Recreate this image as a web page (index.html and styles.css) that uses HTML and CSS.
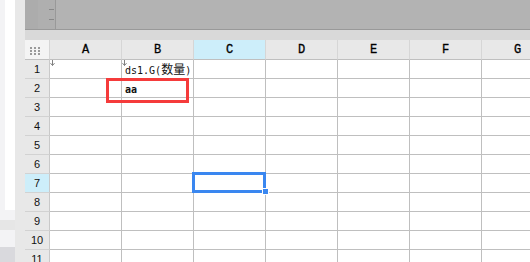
FILE: index.html
```html
<!DOCTYPE html>
<html lang="zh">
  <head>
    <meta charset="utf-8" />
    <title>Report Designer</title>
    <link rel="stylesheet" href="styles.css">
  </head>
  <body>
    <div class="app">
      <div class="side">
        <div class="side-top"></div>
        <div class="side-s1"></div>
        <div class="side-s2"></div>
        <div class="side-s3"></div>
        <div class="side-s4"></div>
      </div>
      <div class="main">
        <div class="toolbar">
          <div class="tb-handle"></div>
          <div class="tb-ruler"><i></i><i></i></div>
          <div class="tb-area"></div>
        </div>
        <div class="band"></div>
        <div class="sheet">
          <div class="grid">
            <!-- header -->
            <div class="c corner">
              <svg width="10" height="8" viewBox="0 0 10 8">
                <g fill="#9a9a9a">
                  <rect x="0" y="0" width="2" height="2"/><rect x="4" y="0" width="2" height="2"/><rect x="8" y="0" width="2" height="2"/>
                  <rect x="0" y="3" width="2" height="2"/><rect x="4" y="3" width="2" height="2"/><rect x="8" y="3" width="2" height="2"/>
                  <rect x="0" y="6" width="2" height="2"/><rect x="4" y="6" width="2" height="2"/><rect x="8" y="6" width="2" height="2"/>
                </g>
              </svg>
            </div>
            <div class="c h">A</div>
            <div class="c h">B</div>
            <div class="c h hi">C</div>
            <div class="c h">D</div>
            <div class="c h">E</div>
            <div class="c h">F</div>
            <div class="c h">G</div>

            <!-- row 1 -->
            <div class="c rh">1</div>
            <div class="c"><svg class="dir" width="5" height="6" viewBox="0 0 5 6"><path d="M2.5 0V5.5M0.5 3.2L2.5 5.5L4.5 3.2" fill="none" stroke="#808080"/></svg></div>
            <div class="c txt"><svg class="dir" width="5" height="6" viewBox="0 0 5 6"><path d="M2.5 0V5.5M0.5 3.2L2.5 5.5L4.5 3.2" fill="none" stroke="#808080"/></svg>ds1.G(<span class="zh">数量</span>)</div>
            <div class="c"></div><div class="c"></div><div class="c"></div><div class="c"></div><div class="c"></div>

            <!-- row 2 -->
            <div class="c rh">2</div>
            <div class="c"></div>
            <div class="c txt val">aa</div>
            <div class="c"></div><div class="c"></div><div class="c"></div><div class="c"></div><div class="c"></div>

            <div class="c rh">3</div>
            <div class="c"></div><div class="c"></div><div class="c"></div><div class="c"></div><div class="c"></div><div class="c"></div><div class="c"></div>
            <div class="c rh">4</div>
            <div class="c"></div><div class="c"></div><div class="c"></div><div class="c"></div><div class="c"></div><div class="c"></div><div class="c"></div>
            <div class="c rh">5</div>
            <div class="c"></div><div class="c"></div><div class="c"></div><div class="c"></div><div class="c"></div><div class="c"></div><div class="c"></div>
            <div class="c rh">6</div>
            <div class="c"></div><div class="c"></div><div class="c"></div><div class="c"></div><div class="c"></div><div class="c"></div><div class="c"></div>
            <div class="c rh hi">7</div>
            <div class="c"></div><div class="c"></div><div class="c"></div><div class="c"></div><div class="c"></div><div class="c"></div><div class="c"></div>
            <div class="c rh">8</div>
            <div class="c"></div><div class="c"></div><div class="c"></div><div class="c"></div><div class="c"></div><div class="c"></div><div class="c"></div>
            <div class="c rh">9</div>
            <div class="c"></div><div class="c"></div><div class="c"></div><div class="c"></div><div class="c"></div><div class="c"></div><div class="c"></div>
            <div class="c rh">10</div>
            <div class="c"></div><div class="c"></div><div class="c"></div><div class="c"></div><div class="c"></div><div class="c"></div><div class="c"></div>
            <div class="c rh">11</div>
            <div class="c"></div><div class="c"></div><div class="c"></div><div class="c"></div><div class="c"></div><div class="c"></div><div class="c"></div>
          </div>

          <div class="mark-red"></div>
          <div class="selection"><span class="handle"></span></div>
        </div>
      </div>
    </div>
  </body>
</html>
```

FILE: styles.css
```css
html,
body {
  margin: 0;
  padding: 0;
  width: 530px;
  height: 262px;
  overflow: hidden;
  background: #e8e8e8;
}
.app {
  display: flex;
  height: 262px;
}
.side {
  width: 15px;
  display: flex;
  flex-direction: column;
  flex-shrink: 0;
}
.side-top {
  height: 210px;
  background: #fff;
  border-left: 5px solid #f3f3f5;
  box-sizing: border-box;
}
.side-s1 {
  height: 10px;
  background: #f3f3f5;
}
.side-s2 {
  height: 10px;
  background: #e6e6e6;
}
.side-s3 {
  height: 17px;
  background: #f3f3f5;
}
.side-s4 {
  flex: 1;
  background: #d9d9dd;
}
.main {
  flex: 1;
  padding-left: 10px;
  background: #e8e8e8;
  overflow: hidden;
}
.toolbar {
  display: flex;
  height: 30px;
  box-sizing: border-box;
  border-bottom: 1px solid #999;
}
.tb-handle {
  width: 13px;
  background: #acacac;
}
.tb-ruler {
  width: 18px;
  box-sizing: border-box;
  padding-top: 9px;
  background: #afafaf;
  border-right: 1px solid #999;
}
.tb-ruler i {
  display: block;
  width: 5px;
  height: 1px;
  margin: 0 0 9px 11px;
  background: #888;
}
.tb-area {
  flex: 1;
  background: #b3b3b3;
}
.band {
  height: 10px;
  background: #d9d9d9;
}
.sheet {
  position: relative;
}
.grid {
  display: grid;
  grid-template-columns: 25px repeat(7, 72px);
  grid-template-rows: 20px repeat(11, 19px);
}
.c {
  position: relative;
  box-sizing: border-box;
  border-right: 1px solid #bfbfbf;
  border-bottom: 1px solid #bfbfbf;
  background: #fff;
  color: #111;
}
.corner {
  background: #f4f4f4;
  border-right-color: #d6d6d6;
  padding: 7px 0 0 5px;
}
.corner svg {
  display: block;
}
.h {
  background: #e8e8e8;
  border-right-color: #d6d6d6;
  text-align: center;
  color: #000;
  font: 12px/20px "Liberation Mono", monospace;
  -webkit-text-stroke: 0.3px #000;
}
.rh {
  background: #e8e8e8;
  border-right-color: #c9c9c9;
  border-bottom-color: #d2d2d2;
  text-align: center;
  font: 11px/19px "Liberation Sans", sans-serif;
}
.hi {
  background: #cdeefa;
}
.txt {
  padding-left: 3px;
  font: 10px/18px "DejaVu Sans Mono", "Noto Sans CJK SC", monospace;
  white-space: nowrap;
}
.txt .zh {
  font-size: 12px;
  font-family: "Noto Sans CJK SC", sans-serif;
}
.val {
  padding-top: 2px;
  font-weight: bold;
}
.dir {
  position: absolute;
  left: 0;
  top: 0;
}
.mark-red {
  position: absolute;
  left: 81px;
  top: 38px;
  width: 83px;
  height: 25px;
  box-sizing: border-box;
  border: 3px solid #f53b3b;
}
.selection {
  position: absolute;
  left: 167px;
  top: 132px;
  width: 74px;
  height: 21px;
  box-sizing: border-box;
  border: 3px solid #3a87f0;
}
.handle {
  position: absolute;
  left: 67px;
  top: 13px;
  width: 7px;
  height: 7px;
  box-sizing: border-box;
  border: 1px solid #fff;
  background: #3a87f0;
}
```
